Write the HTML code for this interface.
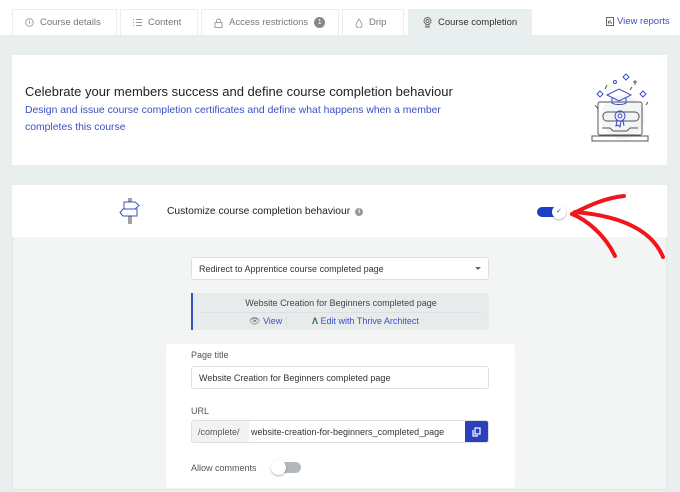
<!DOCTYPE html>
<html><head><meta charset="utf-8"><style>
*{box-sizing:border-box;margin:0;padding:0}
body{width:680px;height:492px;overflow:hidden;background:#e9eeee;font-family:"Liberation Sans",sans-serif;position:relative;color:#2b2f36}
.abs{position:absolute}
.top{left:0;top:0;width:680px;height:35px;background:#fff}
.tab{top:9px;height:26px;background:#fff;border:1px solid #eceeee;border-bottom:none;font-size:9.5px;color:#777;display:flex;align-items:center;padding-left:12px;gap:6px}
.tab.act{background:#e9eeee;color:#333;border-color:#e9eeee}
.card{background:#fff}
.in{background:#fff;border:1px solid #dcdfe2;border-radius:3px;font-size:9px;color:#333;display:flex;align-items:center}
</style></head><body>
<div class="abs top"></div>
<div class="abs tab" style="left:12px;width:105px"><svg width="9" height="9"><circle cx="4.5" cy="4.5" r="3.8" fill="none" stroke="#999" stroke-width=".9"/><path d="M4.5 2.5v3" stroke="#999"/></svg>Course details</div>
<div class="abs tab" style="left:120px;width:78px"><svg width="9" height="9" stroke="#999" stroke-width=".9"><path d="M0 1.5h1M3 1.5h6M0 4.5h1M3 4.5h6M0 7.5h1M3 7.5h6"/></svg>Content</div>
<div class="abs tab" style="left:201px;width:138px"><svg width="9" height="10" stroke="#999" fill="none" stroke-width=".9"><rect x="1" y="4.5" width="7" height="5"/><path d="M2.5 4.5V3a2 2 0 0 1 4 0v1.5"/></svg>Access restrictions <span style="background:#888;color:#fff;border-radius:50%;width:11px;height:11px;font-size:7px;display:inline-flex;align-items:center;justify-content:center">1</span></div>
<div class="abs tab" style="left:342px;width:62px"><svg width="8" height="10" fill="none" stroke="#999" stroke-width=".9"><path d="M4 1C2 4 1 5.5 1 7a3 3 0 0 0 6 0C7 5.5 6 4 4 1z"/></svg>Drip</div>
<div class="abs tab act" style="left:408px;width:124px;padding-left:14px"><svg width="9" height="11" fill="none" stroke="#666" stroke-width=".9"><circle cx="4.5" cy="4" r="3.5"/><circle cx="4.5" cy="4" r="1.5"/><path d="M3 7.5v3l1.5-1 1.5 1v-3"/></svg>Course completion</div>
<div class="abs" style="left:606px;top:16px;font-size:9.5px;color:#3b4fc4;display:flex;gap:3px;align-items:center"><svg width="8" height="9" fill="none" stroke="#556" stroke-width=".9"><rect x=".5" y=".5" width="7" height="8"/><path d="M2.5 6.5V4M4 6.5V3M5.5 6.5V5"/></svg>View reports</div>

<div class="abs card" style="left:12px;top:55px;width:655px;height:110px"></div>
<div class="abs" style="left:25px;top:84px;font-size:13px;color:#222">Celebrate your members success and define course completion behaviour</div>
<div class="abs" style="left:25px;top:102px;font-size:10.4px;color:#3b4fc4;line-height:17px;width:450px">Design and issue course completion certificates and define what happens when a member completes this course</div>
<svg class="abs" style="left:585px;top:72px" width="75" height="75" fill="none" stroke-width="1">
<circle cx="38" cy="45" r="22" fill="#f2f4f6" stroke="none"/>
<rect x="13" y="30" width="44" height="33" rx="2" stroke="#555"/>
<rect x="7" y="64" width="56" height="5" stroke="#555"/>
<path d="M17 56h8l3 3h14l3-3h8" stroke="#555"/>
<rect x="18" y="40" width="36" height="9" rx="4" stroke="#555"/>
<circle cx="35" cy="44" r="5" stroke="#3b4fc4"/><circle cx="35" cy="44" r="2" stroke="#3b4fc4"/>
<path d="M32 48l-1 6 2-1 2 2 1-6M38 48l1 6" stroke="#3b4fc4"/>
<path d="M22 23l12-6 12 6-12 6z M27 26v5c3 2 11 2 14 0v-5" stroke="#3b4fc4"/>
<path d="M12 22l3-3 3 3-3 3z M55 22l3-3 3 3-3 3z M38 5l3-3 3 3-3 3z" stroke="#3b4fc4"/>
<circle cx="30" cy="10" r="1.5" stroke="#3b4fc4"/>
<path d="M20 17l2-4M50 8v5M48 10h4M45 18l2-3M10 33l3 4M61 33l2-3" stroke="#555"/>
</svg>

<div class="abs" style="left:12px;top:185px;width:655px;height:305px;background:#f3f5f5;border:1px solid #e3e6e6"></div>
<div class="abs card" style="left:12px;top:185px;width:655px;height:52px"></div>
<svg class="abs" style="left:117px;top:197px" width="30" height="28" fill="none" stroke="#3b4fc4" stroke-width="1">
<path d="M7 5h11l4 3.5-4 3.5H7z M20 12H6l-3 3.5 3 3.5h14z"/>
<path d="M12 1v4M14 1v4M12 19v8M14 19v8" stroke="#444"/>
</svg>
<div class="abs" style="left:167px;top:206px;font-size:10.3px;color:#222;display:flex;align-items:center;gap:5px">Customize course completion behaviour <span style="display:flex;width:8px;height:8px;border-radius:50%;background:#999;color:#fff;font-size:6px;align-items:center;justify-content:center;font-weight:bold">i</span></div>
<div class="abs" style="left:537px;top:207px;width:24px;height:10px;border-radius:5px;background:#1f3ec4"></div>
<div class="abs" style="left:552px;top:205px;width:14px;height:14px;border-radius:50%;background:#fff;box-shadow:0 1px 2px rgba(0,0,0,.3);font-size:7px;color:#1f3ec4;text-align:center;line-height:14px">✓</div>
<svg class="abs" style="left:565px;top:190px" width="110" height="75" fill="none" stroke="#f0161b" stroke-linecap="round" stroke-linejoin="round">
<path d="M7 24C25 15 40 8 59 6" stroke-width="4"/>
<path d="M7 24C22 30 40 45 50 66" stroke-width="4"/>
<path d="M10 22C45 25 85 35 98 67" stroke-width="4"/>
</svg>

<div class="abs in" style="left:191px;top:257px;width:298px;height:23px;padding-left:7px;justify-content:space-between;padding-right:7px">Redirect to Apprentice course completed page<span style="border-left:3px solid transparent;border-right:3px solid transparent;border-top:3.5px solid #666"></span></div>
<div class="abs" style="left:191px;top:293px;width:298px;height:37px;background:#e8ebec;border-left:2px solid #3b4fc4"></div>
<div class="abs" style="left:193px;top:298px;width:296px;text-align:center;font-size:9px;color:#444">Website Creation for Beginners completed page</div>
<div class="abs" style="left:200px;top:312px;width:282px;border-top:1px solid #dde0e2"></div>
<div class="abs" style="left:249px;top:316px;font-size:9px;color:#3b4fc4"><span style="color:#777">👁︎</span> View</div>
<div class="abs" style="left:278px;top:316px;height:11px;border-left:1px solid #dde0e2;margin-left:8px"></div>
<div class="abs" style="left:312px;top:316px;font-size:9px;color:#3b4fc4"><b style="color:#2a6e2a">Λ</b> Edit with Thrive Architect</div>

<div class="abs card" style="left:166px;top:344px;width:349px;height:144px;border-radius:3px"></div>
<div class="abs" style="left:191px;top:350px;font-size:9px;color:#555">Page title</div>
<div class="abs in" style="left:191px;top:366px;width:298px;height:23px;padding-left:7px">Website Creation for Beginners completed page</div>
<div class="abs" style="left:191px;top:406px;font-size:9px;color:#555">URL</div>
<div class="abs in" style="left:191px;top:420px;width:298px;height:23px;overflow:hidden">
<span style="background:#f1f2f3;height:100%;display:flex;align-items:center;padding:0 6px;color:#555;width:57px">/complete/</span>
<span style="padding-left:2px;flex:1">website-creation-for-beginners_completed_page</span>
<span style="background:#2a3fc2;width:23px;height:100%;display:flex;align-items:center;justify-content:center"><svg width="9" height="10" fill="none" stroke="#fff" stroke-width="1.2"><rect x="3" y="1" width="5" height="6"/><path d="M1 3v6h5"/></svg></span></div>
<div class="abs" style="left:191px;top:463px;font-size:9px;color:#555">Allow comments</div>
<div class="abs" style="left:274px;top:462px;width:27px;height:11px;border-radius:6px;background:#b3b8bd"></div>
<div class="abs" style="left:271px;top:460px;width:15px;height:15px;border-radius:50%;background:#fff;box-shadow:0 1px 2px rgba(0,0,0,.3)"></div>
</body></html>
